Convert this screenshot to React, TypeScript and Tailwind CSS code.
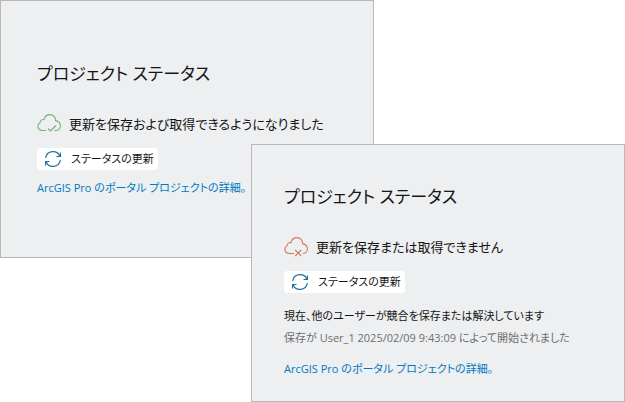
import type { ReactNode } from "react"

type StatusPanelProps = {
  className: string
  icon: ReactNode
  message: string
  children?: ReactNode
}

function CloudCheckIcon() {
  return (
    <svg viewBox="0 0 24 20" className="h-5 w-6 shrink-0 text-[#78b278]" fill="none" stroke="currentColor" strokeWidth="1.1" aria-hidden="true">
      <path d="M9 16.500H5A4.200 4.200 0 0 1 3 8.700C3.200 6.500 5 5.200 7 5.600C7.700 2.600 10.200 0.600 13 0.600C16.400 0.600 18.700 3.300 18.600 6.600C21.500 7.200 23.400 9.200 23.400 11.800C23.400 14.500 21.400 16.500 18.800 16.500H17.500" />
      <path d="M11 14.500L13.500 17L19 11.500" />
    </svg>
  )
}

function CloudErrorIcon() {
  return (
    <svg viewBox="0 0 24 20" className="h-5 w-6 shrink-0 text-[#d47a62]" fill="none" stroke="currentColor" strokeWidth="1.1" aria-hidden="true">
      <path d="M10 16.500H5A4.200 4.200 0 0 1 3 8.700C3.200 6.500 5 5.200 7 5.600C7.700 2.600 10.200 0.600 13 0.600C16.400 0.600 18.700 3.300 18.600 6.600C21.500 7.200 23.400 9.200 23.400 11.800C23.400 14.500 21.400 16.500 18.800 16.500" />
      <path d="M11.200 13L17.200 19M17.200 13L11.200 19" />
    </svg>
  )
}

function RefreshIcon() {
  return (
    <svg viewBox="0 0 16 16" className="size-4 shrink-0 text-[#1f6f9f]" fill="none" stroke="currentColor" strokeWidth="1.2" aria-hidden="true">
      <path d="M0.700 7A7.400 7.400 0 0 1 15 5.500" />
      <path d="M15.500 1.500V5.500H11.500" />
      <path d="M15.300 9A7.400 7.400 0 0 1 1 10.500" />
      <path d="M0.500 14.500V10.500H4.500" />
    </svg>
  )
}

function StatusPanel({ className, icon, message, children }: StatusPanelProps) {
  return (
    <section className={`w-[calc(60%-1px)] border border-[#b8b8b8] bg-[#edeff1] ${className}`}>
      <h2 className="text-[17px] leading-7">プロジェクト ステータス</h2>
      <div className="mt-6 flex items-center gap-2">
        {icon}
        <p className="text-[13px] leading-6">{message}</p>
      </div>
      <button type="button" className="mt-3 flex h-[22px] w-[121px] items-center gap-2.5 rounded bg-white px-2 text-[11px]">
        <RefreshIcon />
        ステータスの更新
      </button>
      {children}
      <a href="#details" className="mt-2 block text-[11px] leading-5 text-[#0079c1]">
        ArcGIS Pro のポータル プロジェクトの詳細。
      </a>
    </section>
  )
}

export default function App() {
  return (
    <main className="bg-white font-['Open_Sans','Noto_Sans_CJK_JP',sans-serif] whitespace-nowrap text-[#151515] [font-feature-settings:'palt']">
      <StatusPanel
        className="pt-[59px] pb-[59px] pl-9"
        icon={<CloudCheckIcon />}
        message="更新を保存および取得できるようになりました"
      />
      <StatusPanel
        className="relative -mt-[114px] ml-auto pt-[38px] pb-[22px] pl-8"
        icon={<CloudErrorIcon />}
        message="更新を保存または取得できません"
      >
        <div className="mt-3 mb-2.5 text-[11px] leading-[22px]">
          <p>現在、他のユーザーが競合を保存または解決しています</p>
          <p className="text-[#6e6e6e]">保存が User_1 2025/02/09 9:43:09 によって開始されました</p>
        </div>
      </StatusPanel>
    </main>
  )
}
